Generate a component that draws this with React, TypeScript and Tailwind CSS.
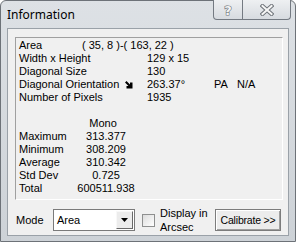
// Ventana "Information" estilo Windows 7 básico
function Arrow() {
  return (
    <svg width="9" height="9" viewBox="0 0 9 9" className="ml-[5px] mt-[2px]">
      <path d="M1 2.5 L2.5 1 L6 4.5 L6 2.5 L8.5 2.5 L8.5 8.5 L2.5 8.5 L2.5 6 L4.5 6 Z" fill="#000" />
    </svg>
  );
}

function TitleButtons() {
  return (
    <div className="-mt-px ml-auto mr-[4px] flex h-[20px]">
      <div className="flex w-[30px] items-center justify-center rounded-bl-[4px] border border-t-0 border-[#747a82] bg-gradient-to-b from-[#eef0f2] to-[#d7dbe0]">
        <svg width="12" height="14" viewBox="0 0 12 14">
          <text
            x="6"
            y="12"
            textAnchor="middle"
            fontFamily="DejaVu Sans, sans-serif"
            fontWeight="bold"
            fontSize="13"
            fill="#f4f4f4"
            stroke="#6f747a"
            strokeWidth="1.2"
            paintOrder="stroke"
          >
            ?
          </text>
        </svg>
      </div>
      <div className="flex w-[48px] items-center justify-center rounded-br-[4px] border border-l-0 border-t-0 border-[#747a82] bg-gradient-to-b from-[#eef0f2] to-[#d7dbe0]">
        <svg width="14" height="12" viewBox="0 0 14 12">
          <path d="M2.5 2 L11.5 10 M11.5 2 L2.5 10" stroke="#6f747a" strokeWidth="4" strokeLinecap="square" />
          <path d="M2.5 2 L11.5 10 M11.5 2 L2.5 10" stroke="#f6f6f6" strokeWidth="2" strokeLinecap="square" />
        </svg>
      </div>
    </div>
  );
}

const stats: [string, string][] = [
  ["Maximum", "313.377"],
  ["Minimum", "308.209"],
  ["Average", "310.342"],
  ["Std Dev", "0.725"],
  ["Total", "600511.938"],
];

export default function App() {
  return (
    <div className="h-[242px] w-[296px] overflow-hidden bg-white font-['Liberation_Sans',Arial,sans-serif] text-black">
      <div className="flex h-[242px] w-[296px] flex-col rounded-t-[6px] border border-[#6d7278] bg-gradient-to-b from-[#dde1e5] to-[#cdd2d7]">
        {/* barra de título */}
        <div className="flex h-[27px] shrink-0 items-start">
          <span className="ml-[6px] mt-[6px] font-['Noto_Sans',sans-serif] text-[12px] leading-[16px] text-black">
            Information
          </span>
          <TitleButtons />
        </div>

        {/* área cliente */}
        <div className="mx-[6px] mb-[5px] flex flex-1 flex-col border border-[#9aa1a8] bg-[#f0f0f0] text-[11px] leading-[13px]">
          <div className="ml-[7px] mt-[8px] h-[163px] w-[268px] border border-b-white border-l-[#a0a0a0] border-r-white border-t-[#a0a0a0] pl-[3px] pt-[1px]">
            <div className="flex">
              <span className="w-[63px]">Area</span>
              <span>( 35, 8 )-( 163, 22 )</span>
            </div>
            <div className="flex">
              <span className="w-[128px]">Width x Height</span>
              <span>129 x 15</span>
            </div>
            <div className="flex">
              <span className="w-[128px]">Diagonal Size</span>
              <span>130</span>
            </div>
            <div className="flex">
              <span className="flex w-[128px] items-start">
                Diagonal Orientation
                <Arrow />
              </span>
              <span className="w-[67px]">263.37°</span>
              <span className="w-[23px]">PA</span>
              <span>N/A</span>
            </div>
            <div className="flex">
              <span className="w-[128px]">Number of Pixels</span>
              <span>1935</span>
            </div>
            <div className="h-[13px]" />
            <div className="flex">
              <span className="ml-[57px] w-[54px] text-center">Mono</span>
            </div>
            {stats.map(([k, v]) => (
              <div key={k} className="flex">
                <span className="w-[57px]">{k}</span>
                <span className="w-[60px] text-center">{v}</span>
              </div>
            ))}
          </div>

          {/* fila inferior */}
          <div className="mt-[9px] flex h-[22px] items-center">
            <span className="ml-[8px] w-[37px]">Mode</span>
            <div className="flex h-[22px] w-[82px] items-center border border-[#7a7a7a] bg-white">
              <span className="flex-1 pl-[3px]">Area</span>
              <div className="mr-px flex h-[18px] w-[17px] items-center justify-center border border-b-[#696969] border-l-[#f8f8f8] border-r-[#696969] border-t-[#f8f8f8] bg-[#ececec]">
                <svg width="7" height="4" viewBox="0 0 7 4">
                  <path d="M0 0 H7 L3.5 4 Z" fill="#000" />
                </svg>
              </div>
            </div>
            <div className="ml-[7px] h-[13px] w-[13px] border border-[#8e8f8f] bg-gradient-to-br from-[#dcdcdc] to-white" />
            <span className="ml-[5px] leading-[14px]">
              Display in
              <br />
              Arcsec
            </span>
            <div className="ml-auto mr-[7px] flex h-[22px] w-[66px] items-center justify-center border border-[#7c7c7c] bg-[#ececec] text-[10.5px] tracking-[-0.2px] shadow-[inset_1px_1px_0_#fff,inset_-1px_-1px_0_#a0a0a0]">
              Calibrate &gt;&gt;
            </div>
          </div>
        </div>
      </div>
    </div>
  );
}
